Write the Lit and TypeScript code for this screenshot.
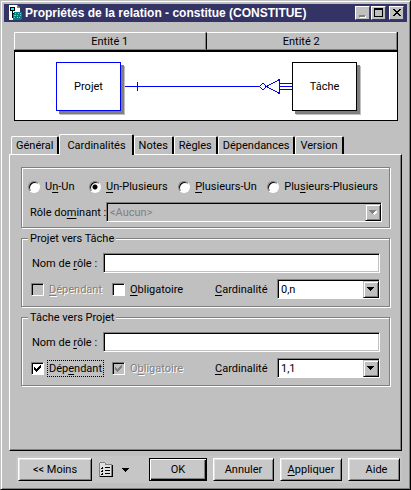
import { LitElement, html, css, svg } from "lit";
import { customElement, state } from "lit/decorators.js";

const TABS = ["Général", "Cardinalités", "Notes", "Règles", "Dépendances", "Version"];

@customElement("app-root")
export class AppRoot extends LitElement {
  @state() private tab = "Cardinalités";

  static styles = css`
    :host {
      display: block;
      font: 11px/13px Roboto, "Liberation Sans", Arial, sans-serif;
      color: #000;
    }
    * { box-sizing: border-box; }
    button, input, select, fieldset, legend {
      font: inherit;
      color: inherit;
      margin: 0;
      padding: 0;
      border: 0;
      border-radius: 0;
      min-width: 0;
      outline: none;
    }
    u { text-underline-offset: 2px; }
    .window {
      display: flex;
      flex-direction: column;
      min-height: 100vh;
      padding: 2px 2px 3px 2px;
      background: #c0c0c0;
      border: 1px solid #c0c0c0;
      border-right-color: #000;
      border-bottom-color: #000;
      box-shadow: inset 1px 1px 0 #fff, inset -1px -1px 0 #808080;
    }
    .title {
      display: flex;
      align-items: center;
      height: 18px;
      margin: 1px 1px 0 1px;
      padding: 0 3px 0 4px;
      background: #333366;
      color: #fff;
    }
    .title h1 {
      flex: 1;
      margin: 0 0 0 2px;
      font: bold 12px/16px "Liberation Sans", Arial, sans-serif;
      white-space: nowrap;
    }
    .caption {
      width: 15px;
      height: 14px;
      background: #c0c0c0;
      border: 1px solid #fff;
      border-right-color: #404040;
      border-bottom-color: #404040;
    }
    .caption svg { display: block; margin: 1px; }
    .caption + .caption { margin-left: 1px; }
    .caption + .close { margin-left: 3px; }
    .view { margin: 10px 10px 0 11px; }
    .heads { display: flex; border-right: 1px solid #000; }
    .head {
      flex: 1;
      height: 18px;
      text-align: center;
      line-height: 17px;
      border: 1px solid #fff;
      border-right-color: #808080;
      border-bottom-color: #808080;
    }
    .head + .head { border-left-color: #000; }
    .diagram {
      display: flex;
      padding: 10px 40px 9px 41px;
      background: #fff;
      border: 1px solid #000;
      border-top-width: 2px;
    }
    .node {
      width: 65px;
      height: 49px;
      text-align: center;
      line-height: 48px;
      background: #fff;
      border: 1px solid #000;
      box-shadow: 3px 3px 0 #808080, 4px 4px 0 #c0c0c0;
    }
    .node.active { border-color: #00f; }
    .link { flex: 1; display: flex; height: 49px; }
    .link svg { display: block; margin-left: auto; }
    .wire {
      flex: 1;
      height: 9px;
      margin: 20px 0 0 4px;
      background:
        linear-gradient(#00f, #00f) 12px 0 / 1px 9px no-repeat,
        linear-gradient(#00f, #00f) 0 4px / 100% 1px no-repeat;
    }
    .tabs {
      display: flex;
      align-items: flex-end;
      margin: 13px 6px 0 8px;
      height: 20px;
    }
    .tab {
      height: 18px;
      padding: 0 4px;
      white-space: nowrap;
      background: #c0c0c0;
      border: 1px solid #fff;
      border-right: 2px solid #000;
      border-bottom: 0;
      border-radius: 2px 2px 0 0;
    }
    .tab.on {
      height: 21px;
      margin-bottom: -1px;
      padding: 0 6px 0 7px;
      position: relative;
    }
    .panel {
      flex: 1;
      display: flex;
      flex-direction: column;
      gap: 10px;
      margin: 0 6px 0 6px;
      padding: 12px 10px 10px 11px;
      border: 1px solid #fff;
      border-right-color: #000;
      border-bottom-color: #000;
      box-shadow: inset -1px -1px 0 #808080;
    }
    .group {
      border: 1px solid #808080;
      box-shadow: 1px 1px 0 #fff, inset 1px 1px 0 #fff;
      margin-right: 1px;
    }
    .group.kinds { height: 61px; padding: 10px 7px 0 6px; }
    .group.role { padding: 8px 9px 7px 8px; }
    legend {
      margin-left: -2px;
      padding: 0 2px;
      height: 13px;
      background: #c0c0c0;
    }
    .role { margin-top: -6px; }
    .row { display: flex; align-items: center; }
    .radios { height: 17px; justify-content: space-between; padding-right: 4px; }
    .radios .opt:first-child { margin-right: 4px; }
    .opt { display: flex; align-items: center; white-space: nowrap; }
    input[type="radio"] {
      appearance: none;
      width: 12px;
      height: 12px;
      margin-right: 5px;
      border-radius: 50%;
      background: #fff;
      border: 1px solid #808080;
      border-right-color: #fff;
      border-bottom-color: #fff;
      box-shadow: inset 1px 1px 0 #000;
    }
    input[type="radio"]:checked {
      background: radial-gradient(circle at 5px 5px, #000 2px, #fff 3px);
    }
    .dominant { margin-top: 7px; }
    .dominant label { width: 78px; padding-left: 2px; white-space: nowrap; }
    .name label { width: 73px; padding-left: 2px; white-space: nowrap; }
    .field {
      flex: 1;
      width: 0;
      height: 20px;
      padding: 0 3px;
      background: #fff;
      border: 1px solid #808080;
      border-right-color: #fff;
      border-bottom-color: #fff;
      box-shadow: inset 1px 1px 0 #000, inset -1px -1px 0 #c0c0c0;
    }
    .pick {
      flex: 1;
      display: grid;
      height: 20px;
      background: #fff;
      border: 1px solid #808080;
      border-right-color: #fff;
      border-bottom-color: #fff;
      box-shadow: inset 1px 1px 0 #000;
    }
    .pick select, .pick .drop { grid-area: 1 / 1; }
    .pick select {
      appearance: none;
      width: 100%;
      padding: 0 18px 0 3px;
      background: none;
      opacity: 1;
    }
    .pick.off { background: #c0c0c0; color: #808080; }
    .drop {
      justify-self: end;
      display: grid;
      place-items: center;
      width: 16px;
      height: 17px;
      margin: 1px 0 0 0;
      background: #c0c0c0;
      border: 1px solid #c0c0c0;
      border-right-color: #000;
      border-bottom-color: #000;
      box-shadow: inset 1px 1px 0 #fff, inset -1px -1px 0 #808080;
      pointer-events: none;
    }
    .checks { margin-top: 6px; padding-left: 1px; }
    .checks .opt { width: 81px; }
    input[type="checkbox"] {
      appearance: none;
      width: 13px;
      height: 13px;
      margin-right: 3px;
      background: #fff;
      border: 1px solid #808080;
      border-right-color: #fff;
      border-bottom-color: #fff;
      box-shadow: inset 1px 1px 0 #000;
    }
    input[type="checkbox"]:disabled { background: #c0c0c0; }
    .box { display: grid; }
    .box > * { grid-area: 1 / 1; }
    .box svg { margin: 3px; pointer-events: none; }
    .word { padding: 1px; border: 1px solid transparent; }
    .word.focus { border: 1px dotted #000; }
    .off .word { color: #808080; text-shadow: 1px 1px 0 #fff; }
    .checks .card { margin-left: auto; width: 62px; white-space: nowrap; }
    .checks .pick { flex: 0 0 103px; }
    .actions {
      display: flex;
      align-items: center;
      gap: 6px;
      margin: 5px 6px 3px 13px;
      padding: 2px;
      background: #c6c6c6;
    }
    .btn {
      height: 23px;
      background: #c8c8c8;
      border: 1px solid #fff;
      border-right-color: #000;
      border-bottom-color: #000;
      box-shadow: inset 1px 1px 0 #e0e0e0, inset -1px -1px 0 #808080;
      white-space: nowrap;
    }
    .less { flex: 0 0 74px; }
    .ok { flex: 0 0 58px; border: 1px solid #000; box-shadow: inset 1px 1px 0 #fff, inset -1px -1px 0 #000, inset -2px -2px 0 #808080; }
    .cancel { flex: 0 0 61px; }
    .apply { flex: 0 0 62px; }
    .help { flex: 0 0 52px; padding-left: 5px; }
    .menu { flex: 1; display: flex; align-items: center; gap: 9px; padding-left: 1px; background: none; }
  `;

  private arrow(off = false) {
    return html`<span class="drop"><svg width="8" height="5" viewBox="0 0 8 5" shape-rendering="crispEdges">
      ${off ? svg`<path d="M2 1h7v1h-1v1h-1v1h-1v1h-1v-1h-1v-1h-1v-1h-1z" fill="#fff"/>` : ""}
      <path d="M0 0h7v1H6v1H5v1H4v1H3V3H2V2H1V1H0z" fill=${off ? "#808080" : "#000"} />
    </svg></span>`;
  }

  private tick(color: string) {
    return html`<svg width="7" height="7" viewBox="0 0 7 7" shape-rendering="crispEdges">
      <path fill=${color} d="M0 2h1v1h1v1h1V3h1V2h1V1h1V0h1v3H6v1H5v1H4v1H3v1H2V6H1V5H0z" />
    </svg>`;
  }

  private role(id: string, title: string, value: string, dep: boolean) {
    return html`<fieldset class="group role">
      <legend>${title}</legend>
      <div class="row name">
        <label for="${id}-n">Nom de <u>r</u>ôle :</label>
        <input class="field" id="${id}-n" type="text" />
      </div>
      <div class="row checks">
        <label class="opt ${dep ? "" : "off"}">
          <span class="box"><input type="checkbox" ?checked=${dep} ?disabled=${!dep} />${dep ? this.tick("#000") : ""}</span>
          <span class="word ${dep ? "focus" : ""}">${dep ? html`Dép<u>e</u>ndant` : html`<u>D</u>épendant`}</span>
        </label>
        <label class="opt ${dep ? "off" : ""}">
          <span class="box"><input type="checkbox" ?checked=${dep} ?disabled=${dep} />${dep ? this.tick("#808080") : ""}</span>
          <span class="word">${dep ? html`O<u>b</u>ligatoire` : html`<u>O</u>bligatoire`}</span>
        </label>
        <label class="card" for="${id}-c"><u>C</u>ardinalité</label>
        <span class="pick"><select id="${id}-c"><option>${value}</option></select>${this.arrow()}</span>
      </div>
    </fieldset>`;
  }

  render() {
    return html`<main class="window">
      <header class="title">
        <svg width="15" height="16" viewBox="0 0 15 16" shape-rendering="crispEdges">
          <path fill="#fff" d="M1 0h8l3 3v12H1z" />
          <path fill="#808080" d="M9 0h1v1h1v1h1v1h-3z" />
          <path fill="#000" d="M2 2h5v1H2zM2 2h1v4H2zM6 2h1v4H6zM2 5h5v1H2zM4 6h1v7H4zM4 8h3v1H4z" />
          <path fill="#0ff" d="M3 3h3v2H3z" />
          <path fill="#008080" d="M6 7h8v7h-1v1H5V9h1z" />
          <path fill="#0ff" d="M7 8h1v1H7zM10 8h1v1h-1zM12 8h1v1h-1zM6 10h2v1H6zM9 10h1v1H9zM12 10h1v1h-1zM6 12h1v1H6zM9 12h1v1H9zM11 12h1v1h-1z" />
        </svg>
        <h1>Propriétés de la relation - constitue (CONSTITUE)</h1>
        <button class="caption" aria-label="Réduire"><svg width="11" height="10" viewBox="0 0 11 10" shape-rendering="crispEdges"><path d="M3 8h6v2H3z" fill="#fff"/><path d="M2 7h6v2H2z" fill="#808080"/></svg></button>
        <button class="caption" aria-label="Agrandir"><svg width="11" height="10" viewBox="0 0 11 10" shape-rendering="crispEdges"><path d="M1 0h9v9H1zM2 2v6h7V2z" fill-rule="evenodd"/></svg></button>
        <button class="caption close" aria-label="Fermer"><svg width="11" height="10" viewBox="0 0 11 10" shape-rendering="crispEdges"><path d="M2 1h2v1h1v1h2V2h1V1h2v1H9v1H8v1H7v1h1v1h1v1h1v1H8V7H7V6H5v1H4v1H2V7h1V6h1V5h1V4H4V3H3V2H2z"/></svg></button>
      </header>

      <section class="view">
        <div class="heads"><div class="head">Entité 1</div><div class="head">Entité 2</div></div>
        <div class="diagram">
          <div class="node active">Projet</div>
          <div class="link">
            <div class="wire"></div>
            <svg width="33" height="49" viewBox="0 0 33 49" fill="none" stroke="#00f" shape-rendering="crispEdges">
              <path d="M0.500 24.500L2.500 22.500L3.500 21.500H4.500L7.500 24.500L4.500 27.500H3.500Z" />
              <path d="M7.500 24.500L20.500 17.500V31.500Z M20 21.500H33M20 24.500H33M20 27.500H33" />
            </svg>
          </div>
          <div class="node">Tâche</div>
        </div>
      </section>

      <nav class="tabs" role="tablist">
        ${TABS.map((t) => html`<button role="tab" class="tab ${t === this.tab ? "on" : ""}"
          aria-selected=${t === this.tab} @click=${() => (this.tab = t)}>${t}</button>`)}
      </nav>

      <section class="panel">
        <div class="group kinds">
          <div class="row radios">
            <label class="opt"><input type="radio" name="kind" /><span>U<u>n</u>-Un</span></label>
            <label class="opt"><input type="radio" name="kind" checked /><span><u>U</u>n-Plusieurs</span></label>
            <label class="opt"><input type="radio" name="kind" /><span><u>P</u>lusieurs-Un</span></label>
            <label class="opt"><input type="radio" name="kind" /><span>Plu<u>s</u>ieurs-Plusieurs</span></label>
          </div>
          <div class="row dominant">
            <label for="dom">Rôle do<u>m</u>inant :</label>
            <span class="pick off"><select id="dom" disabled><option>&lt;Aucun&gt;</option></select>${this.arrow(true)}</span>
          </div>
        </div>
        ${this.role("a", "Projet vers Tâche", "0,n", false)}
        ${this.role("b", "Tâche vers Projet", "1,1", true)}
      </section>

      <footer class="actions">
        <button class="btn less">&lt;&lt; Moins</button>
        <button class="menu" aria-label="Menu">
          <svg width="14" height="16" viewBox="0 0 14 16" shape-rendering="crispEdges">
            <path d="M0 1h1V0h5v1h1v1h6v13H0z" fill="#808080" />
            <path d="M1 1h5v2h6v11H1z" fill="#e0e0e0" />
            <path d="M13 3h1v12H1v-1h12zM3 5h1v2H3zM3 8h1v2H3zM3 11h1v2H3zM2 6h1v1H2zM2 9h1v1H2zM2 12h1v1H2zM6 5h5v1H6zM6 8h5v1H6zM6 11h5v1H6z" fill="#000" />
          </svg>
          <svg width="7" height="4" viewBox="0 0 7 4" shape-rendering="crispEdges"><path d="M0 0h7v1H6v1H5v1H4v1H3V3H2V2H1V1H0z" /></svg>
        </button>
        <button class="btn ok">OK</button>
        <button class="btn cancel">Annuler</button>
        <button class="btn apply"><u>A</u>ppliquer</button>
        <button class="btn help">Aide</button>
      </footer>
    </main>`;
  }
}
